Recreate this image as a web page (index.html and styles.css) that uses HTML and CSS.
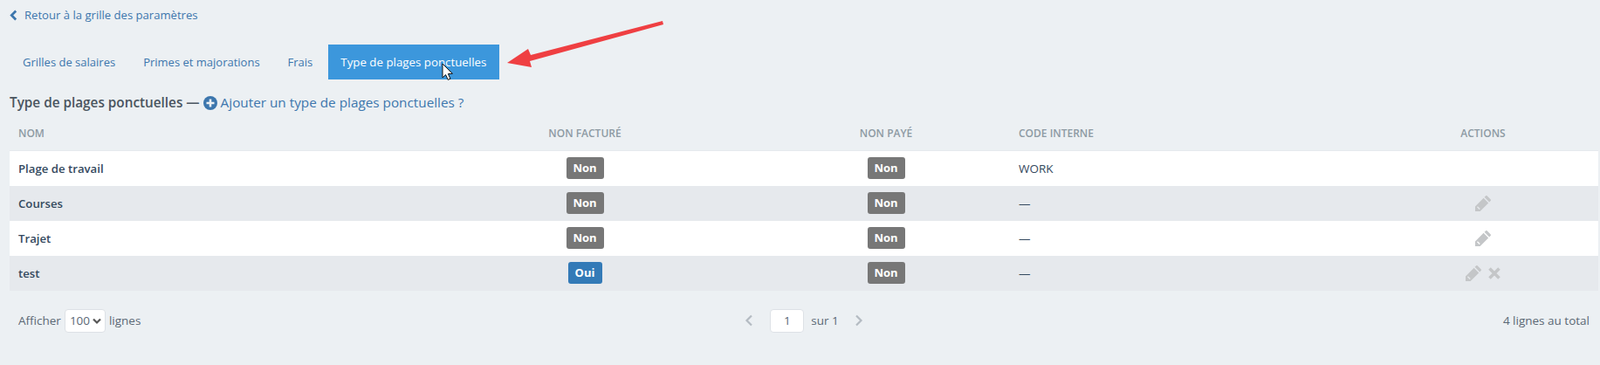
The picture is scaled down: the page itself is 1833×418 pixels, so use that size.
FILE: index.html
```html
<!DOCTYPE html>
<html lang="fr">

<head>
    <meta charset="UTF-8">
    <meta name="viewport" content="width=device-width, initial-scale=1.0">
    <title>Type de plages ponctuelles</title>
    <link rel="stylesheet" href="styles.css">
</head>

<body>
    <svg width="0" height="0" class="sprites">
        <symbol id="pencil" viewBox="0 0 20 20">
            <path d="M14.6 1.2l4.2 4.2c.4.4.4 1 0 1.4l-1.6 1.6-5.6-5.6 1.6-1.6c.4-.4 1-.4 1.4 0z"/>
            <path d="M10.6 3.8l5.6 5.6L6.6 19H1v-5.6zM3 14.2l2.8 2.8.9-.9-2.8-2.8z"/>
        </symbol>
    </svg>

    <a href="#" class="back-link">
        <svg class="back-icon" viewBox="0 0 10 14" width="9" height="13"><path d="M8 1.5L2.5 7 8 12.5" fill="none" stroke="currentColor" stroke-width="3"/></svg>
        Retour à la grille des paramètres
    </a>

    <nav class="tabs">
        <a href="#" class="tab">Grilles de salaires</a>
        <a href="#" class="tab">Primes et majorations</a>
        <a href="#" class="tab">Frais</a>
        <a href="#" class="tab tab-active">Type de plages ponctuelles</a>
    </nav>

    <h2 class="section-title">
        Type de plages ponctuelles —
        <a href="#" class="add-link">
            <svg class="add-icon" viewBox="0 0 16 16" width="16" height="16">
                <circle cx="8" cy="8" r="8" fill="currentColor"/>
                <path d="M8 3.5v9M3.5 8h9" stroke="#ecf0f3" stroke-width="2.6"/>
            </svg>
            Ajouter un type de plages ponctuelles ?
        </a>
    </h2>

    <table class="data-table">
        <colgroup>
            <col class="col-name">
            <col class="col-billed">
            <col class="col-paid">
            <col class="col-code">
            <col class="col-actions">
        </colgroup>
        <thead>
            <tr>
                <th>Nom</th>
                <th class="center">Non facturé</th>
                <th class="center">Non payé</th>
                <th>Code interne</th>
                <th class="center">Actions</th>
            </tr>
        </thead>
        <tbody>
            <tr>
                <td class="name">Plage de travail</td>
                <td class="center"><span class="badge">Non</span></td>
                <td class="center"><span class="badge">Non</span></td>
                <td class="code">WORK</td>
                <td class="center"></td>
            </tr>
            <tr>
                <td class="name">Courses</td>
                <td class="center"><span class="badge">Non</span></td>
                <td class="center"><span class="badge">Non</span></td>
                <td class="code">—</td>
                <td class="center"><svg class="action" width="20" height="20"><use href="#pencil"/></svg></td>
            </tr>
            <tr>
                <td class="name">Trajet</td>
                <td class="center"><span class="badge">Non</span></td>
                <td class="center"><span class="badge">Non</span></td>
                <td class="code">—</td>
                <td class="center"><svg class="action" width="20" height="20"><use href="#pencil"/></svg></td>
            </tr>
            <tr>
                <td class="name">test</td>
                <td class="center"><span class="badge badge-yes">Oui</span></td>
                <td class="center"><span class="badge">Non</span></td>
                <td class="code">—</td>
                <td class="center">
                    <svg class="action" width="20" height="20"><use href="#pencil"/></svg>
                    <svg class="action action-delete" viewBox="0 0 16 16" width="16" height="16"><path d="M2.5 2.5l11 11M13.5 2.5l-11 11" fill="none" stroke="currentColor" stroke-width="3.6"/></svg>
                </td>
            </tr>
        </tbody>
    </table>

    <footer class="table-footer">
        <div class="page-size">
            Afficher
            <span class="select-wrap">
                <select class="size-select">
                    <option>100</option>
                </select>
                <svg class="select-arrow" viewBox="0 0 10 8" width="10" height="8"><path d="M1 1.5l4 4 4-4" fill="none" stroke="currentColor" stroke-width="2.2"/></svg>
            </span>
            lignes
        </div>
        <div class="pager">
            <svg class="pager-arrow" viewBox="0 0 10 14" width="10" height="14"><path d="M8 1.5L2.5 7 8 12.5" fill="none" stroke="currentColor" stroke-width="2.2"/></svg>
            <input class="page-input" type="text" value="1">
            <span>sur 1</span>
            <svg class="pager-arrow" viewBox="0 0 10 14" width="10" height="14"><path d="M2 1.5L7.5 7 2 12.5" fill="none" stroke="currentColor" stroke-width="2.2"/></svg>
        </div>
        <div class="total">4 lignes au total</div>
    </footer>

    <!-- annotation drawn over the screenshot -->
    <svg class="annotation" width="1833" height="418" viewBox="0 0 1833 418">
        <path d="M759 24L608 63 605 56 581 72 609 77 607 70 760 28z" fill="#ef3f42"/>
        <path d="M507 73v16l3.6-3.4 2.6 5.8 2.8-1.2-2.6-5.6 5-.3z" fill="#fff" stroke="#111" stroke-width="1"/>
    </svg>
</body>

</html>
```

FILE: styles.css
```css
body {
    font-family: "Open Sans", "Noto Sans", sans-serif;
    font-size: 13px;
    background-color: #ecf0f3;
    color: #34495e;
    margin: 0;
    padding: 0 2px 0 11px;
    height: 418px;
    overflow: hidden;
    position: relative;
}

a {
    color: #3c76ad;
    text-decoration: none;
}

.sprites {
    position: absolute;
}

.back-link {
    display: flex;
    align-items: center;
    gap: 8px;
    height: 18px;
    padding-top: 8px;
    font-size: 13.1px;
}

.back-icon {
    flex: none;
}

/* Tabs */
.tabs {
    display: flex;
    gap: 4px;
    margin-top: 25px;
    padding-left: 1px;
}

.tab {
    padding: 0 14px;
    line-height: 40px;
}

.tab-active {
    padding: 0 15px 0 14px;
    font-size: 13.3px;
    background-color: #3c97dc;
    color: #fff;
}

.section-title {
    font-size: 15.3px;
    font-weight: 600;
    color: #4a5560;
    margin: 16px 0 0;
    line-height: 20px;
}

.add-link {
    font-weight: 500;
}

.add-icon {
    vertical-align: -3px;
}

/* Table */
.data-table {
    width: 1820px;
    table-layout: fixed;
    border-collapse: collapse;
    margin-top: 6px;
}

.col-name { width: 456px; }
.col-billed { width: 406px; }
.col-paid { width: 284px; }
.col-code { width: 410px; }
.col-actions { width: 264px; }

th {
    height: 39px;
    box-sizing: border-box;
    padding: 0 10px;
    text-align: left;
    font-size: 12px;
    font-weight: 600;
    color: #8d9aa3;
    text-transform: uppercase;
    border-bottom: 1px solid #e6e9ed;
}

td {
    height: 40px;
    padding: 0 10px;
    background-color: #fff;
}

.name {
    font-size: 13.2px;
    font-weight: 600;
}

.code {
    font-size: 13.5px;
    font-weight: 500;
}

tbody tr:nth-child(even) td {
    background-color: #e6e9ed;
}

th.center,
td.center {
    text-align: center;
}

.badge {
    display: inline-block;
    min-width: 43px;
    box-sizing: border-box;
    padding: 0 7px;
    line-height: 25px;
    font-weight: 700;
    color: #fff;
    background-color: #777;
    border-radius: 3px;
    vertical-align: middle;
}

.badge-yes {
    min-width: 39px;
    background-color: #337ab7;
}

.action {
    fill: #c4c6c8;
    color: #c4c6c8;
    vertical-align: middle;
}

.action-delete {
    margin-left: 2px;
}

/* Footer */
.table-footer {
    display: grid;
    grid-template-columns: 1fr auto 1fr;
    align-items: center;
    width: 1820px;
    margin-top: 21px;
    font-size: 13.5px;
    color: #5b6875;
}

.page-size {
    display: flex;
    align-items: center;
    gap: 4px;
    padding-left: 10px;
}

.select-wrap {
    position: relative;
    display: inline-block;
}

.size-select {
    appearance: none;
    display: block;
    width: 47px;
    height: 27px;
    padding: 0 0 0 5px;
    font: inherit;
    color: #5b6875;
    background-color: #fff;
    border: 1px solid #dde1e6;
    border-radius: 4px;
}

.select-arrow {
    position: absolute;
    right: 5px;
    top: 10px;
    color: #555;
}

.pager {
    display: flex;
    align-items: center;
    gap: 8px;
}

.pager-arrow {
    color: #b4bbc2;
    margin: 0 10px;
}

.page-input {
    width: 39px;
    height: 27px;
    box-sizing: border-box;
    padding: 0;
    margin-left: 1px;
    text-align: center;
    font: inherit;
    color: #5b6875;
    background-color: #fff;
    border: 1px solid #dde1e6;
    border-radius: 4px;
}

.total {
    text-align: right;
    padding-right: 10px;
}

.annotation {
    position: absolute;
    left: 0;
    top: 0;
    pointer-events: none;
}
```
